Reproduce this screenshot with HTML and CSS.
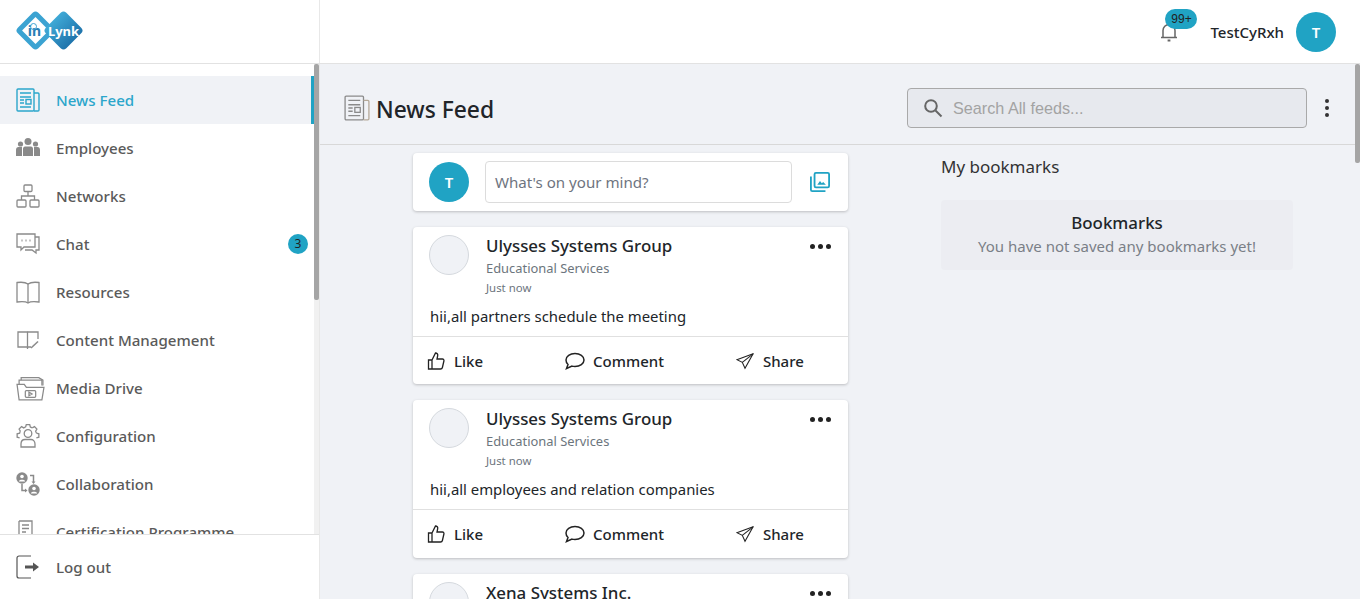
FILE: index.html
```html
<!DOCTYPE html>
<html lang="en">
<head>
  <meta charset="UTF-8">
  <title>inLynk News Feed</title>
  <link rel="stylesheet" href="styles.css">
</head>
<body>

  <header class="topbar">
    <div class="brand">
      <div class="logo">
        <span class="logo-in"><span class="logo-word">in</span></span>
        <span class="logo-lynk"><span class="logo-word">Lynk</span></span>
      </div>
    </div>
    <div class="topbar-right">
      <div class="bell">
        <svg width="20" height="22" viewBox="0 0 20 22" fill="none" stroke="#666" stroke-width="1.5"><path d="M4 16V9.5a6 6 0 0 1 12 0V16"/><path d="M2 16.5h16"/><path d="M8.6 19.5h2.8" stroke-width="2"/></svg>
        <span class="bell-count">99+</span>
      </div>
      <span class="user-name">TestCyRxh</span>
      <div class="avatar">T</div>
    </div>
  </header>

  <div class="app">
    <aside class="sidebar">
      <nav class="nav">
        <a class="nav-item active">
          <svg class="nav-icon" viewBox="0 0 24 24" fill="none" stroke="#2ba6cb" stroke-width="1.4"><rect x="1" y="1" width="17" height="22" rx="1"/><path d="M18 5h4a1 1 0 0 1 1 1v16a1 1 0 0 1-1 1h-4"/><path d="M4 5h11M4 9h11M4 12h4M4 15h4M4 19h11"/><rect x="10" y="11.5" width="5" height="4.5"/></svg>
          <span>News Feed</span>
        </a>
        <a class="nav-item">
          <svg class="nav-icon" viewBox="0 0 24 24" fill="#8a8a8a"><circle cx="12" cy="5.5" r="3.5"/><circle cx="4.5" cy="8" r="2.6"/><circle cx="19.5" cy="8" r="2.6"/><path d="M7 12.5c0-1 1-2 2-2h6c1 0 2 1 2 2V20H7z"/><path d="M0 14c0-2 1-3 2.5-3H6v9H0zM24 14c0-2-1-3-2.5-3H18v9h6z"/></svg>
          <span>Employees</span>
        </a>
        <a class="nav-item">
          <svg class="nav-icon" viewBox="0 0 24 24" fill="none" stroke="#8a8a8a" stroke-width="1.3"><rect x="8" y="1" width="8" height="6.5" rx="1"/><rect x="1" y="16" width="9" height="7" rx="1"/><rect x="14" y="16" width="9" height="7" rx="1"/><path d="M12 7.5V12M5.5 16v-4h13v4"/></svg>
          <span>Networks</span>
        </a>
        <a class="nav-item">
          <svg class="nav-icon" viewBox="0 0 24 24" fill="none" stroke="#8a8a8a" stroke-width="1.3"><path d="M1 2h18v13H8l-3 3v-3H1z"/><path d="M19 5h4v13h-3v3l-4-3H9"/><path d="M5.5 8.5h1M9.5 8.5h1M13.5 8.5h1" stroke-width="1.8"/></svg>
          <span>Chat</span>
          <span class="nav-badge">3</span>
        </a>
        <a class="nav-item">
          <svg class="nav-icon" viewBox="0 0 24 24" fill="none" stroke="#8a8a8a" stroke-width="1.3"><path d="M12 4c-2-1.5-7-2-11-1.5V22c4-.5 9-.5 11 1 2-1.5 7-1.5 11-1V2.500C19 2 14 2.500 12 4z"/><path d="M12 4v19"/></svg>
          <span>Resources</span>
        </a>
        <a class="nav-item">
          <svg class="nav-icon" viewBox="0 0 24 24" fill="none" stroke="#8a8a8a" stroke-width="1.3"><path d="M2 4h9.5v15H2z"/><path d="M11.5 4H22v7M11.5 19v2M11.5 19H15"/><path d="M15 20l7-6.5" stroke-width="1.6"/></svg>
          <span>Content Management</span>
        </a>
        <a class="nav-item">
          <svg class="nav-icon wide" viewBox="0 0 28 26" fill="none" stroke="#8a8a8a" stroke-width="1.2"><path d="M5 5V2.5h17L26 5v5"/><path d="M3 9V5h22v5"/><path d="M1 9h7l2 3h17l-2 12H3z"/><rect x="9" y="15" width="10" height="6.5" rx="1"/><path d="M12.5 16.5V20l3-1.700z"/></svg>
          <span>Media Drive</span>
        </a>
        <a class="nav-item">
          <svg class="nav-icon" viewBox="-12 -11.5 24 24" fill="none" stroke="#8a8a8a" stroke-width="1.3">
            <path d="M-2.4-8.36L-1.72-10.86H1.72L2.4-8.36A8.7 8.7 0 0 1 4.214-7.608"/>
            <path transform="rotate(45)" d="M-2.4-8.36L-1.72-10.86H1.72L2.4-8.36A8.7 8.7 0 0 1 4.214-7.608"/>
            <path transform="rotate(90)" d="M-2.4-8.36L-1.72-10.86H1.72L2.4-8.36"/>
            <path transform="rotate(-45)" d="M-2.4-8.36L-1.72-10.86H1.72L2.4-8.36A8.7 8.7 0 0 1 4.214-7.608"/>
            <path transform="rotate(-90)" d="M-2.4-8.36L-1.72-10.86H1.72L2.4-8.36A8.7 8.7 0 0 1 4.214-7.608"/>
            <circle cx="0" cy="-2" r="3.8"/>
            <path d="M-7 11.500V8.500c0-3 2-4.500 4-4.500h6c2 0 4 1.500 4 4.500v3z"/>
          </svg>
          <span>Configuration</span>
        </a>
        <a class="nav-item">
          <svg class="nav-icon" viewBox="0 0 24 24" fill="none" stroke="#8a8a8a" stroke-width="1.5"><circle cx="6" cy="6" r="5.7" fill="#8a8a8a" stroke="none"/><circle cx="18" cy="18" r="5.7" fill="#8a8a8a" stroke="none"/><circle cx="6" cy="4.5" r="1.8" fill="#fff" stroke="none"/><path d="M2.800 9.500c0-2.500 6.400-2.500 6.400 0z" fill="#fff" stroke="none"/><circle cx="18" cy="16.5" r="1.8" fill="#fff" stroke="none"/><path d="M14.800 21.500c0-2.500 6.400-2.500 6.400 0z" fill="#fff" stroke="none"/><path d="M6 12v6.500h3.500M14 3.500h3.500V10"/><path d="M9 16.500l2.500 2-2.500 2zM15.500 9.500l2 2.500 2-2.500z" fill="#8a8a8a" stroke="none"/></svg>
          <span>Collaboration</span>
        </a>
        <a class="nav-item">
          <svg class="nav-icon" viewBox="0 0 24 24" fill="none" stroke="#8a8a8a" stroke-width="1.3"><path d="M3 1h13v14M3 1v18h9"/><path d="M6 5h7M6 8.500h7M6 12h4"/><circle cx="17" cy="19" r="4"/></svg>
          <span>Certification Programme</span>
        </a>
      </nav>
      <a class="nav-item logout">
        <svg class="nav-icon" viewBox="0 0 24 24" fill="none" stroke="#555" stroke-width="1.2"><path d="M15 1H3a2 2 0 0 0-2 2v18a2 2 0 0 0 2 2h12"/><path d="M9 12h10" stroke-width="3"/><path d="M17 7.500l6 4.500-6 4.500z" fill="#555" stroke="none"/></svg>
        <span>Log out</span>
      </a>
      <div class="scroll-thumb side-thumb"></div>
    </aside>

    <main class="main">
      <div class="page-head">
        <div class="page-title">
          <svg width="26" height="26" viewBox="0 0 24 24" fill="none" stroke="#8a8a8a" stroke-width="1.2"><rect x="1" y="1" width="17" height="22" rx="1"/><path d="M18 5h4a1 1 0 0 1 1 1v16a1 1 0 0 1-1 1h-4" stroke="#b5a999"/><path d="M4 5h11M4 9h11M4 12h4M4 15h4M4 19h11"/><rect x="10" y="11.5" width="5" height="4.5"/></svg>
          <h1>News Feed</h1>
        </div>
        <div class="page-tools">
          <div class="search">
            <svg width="20" height="20" viewBox="0 0 20 20" fill="none" stroke="#666" stroke-width="2"><circle cx="8" cy="8" r="5.8"/><path d="M12.5 12.5l6 6"/></svg>
            <span>Search All feeds...</span>
          </div>
          <div class="kebab"><i></i><i></i><i></i></div>
        </div>
      </div>

      <div class="content">
        <section class="feed">
          <div class="card composer">
            <div class="avatar">T</div>
            <div class="composer-input">What's on your mind?</div>
            <svg width="20" height="20" viewBox="0 0 22 22" fill="none" stroke="#20a3c4" stroke-width="2"><rect x="5" y="1" width="16" height="16" rx="1.5"/><path d="M1 5v14.5a1.5 1.5 0 0 0 1.5 1.5H17"/><path d="M8 14l3-4 2 2.5 1.5-1.5 3 3z" fill="#20a3c4" stroke="none"/></svg>
          </div>

          <article class="card post">
            <div class="post-head">
              <div class="post-logo"></div>
              <div class="post-meta">
                <h3>Ulysses Systems Group</h3>
                <p class="post-sector">Educational Services</p>
                <p class="post-time">Just now</p>
              </div>
              <div class="dots"><i></i><i></i><i></i></div>
            </div>
            <p class="post-text">hii,all partners schedule the meeting</p>
            <div class="post-actions">
              <a class="action like">
                <svg width="18" height="18" viewBox="0 0 18 18" fill="none" stroke="#222" stroke-width="1.3"><path d="M5 8H1.500v9H5zM5 8l3.500-7c1.500 0 2.500 1 2.200 2.500L10 7h5.500c1 0 1.700.9 1.400 2l-1.500 6.500c-.2.9-1 1.500-1.900 1.500H5"/></svg>
                Like
              </a>
              <a class="action comment">
                <svg width="20" height="18" viewBox="0 0 20 18" fill="none" stroke="#222" stroke-width="1.5"><path d="M10 1.500c5 0 9 2.700 9 6.500s-4 6.500-9 6.500c-1 0-2-.1-3-.4L1.500 16.500l1.500-4C1.700 11.300 1 9.700 1 8c0-3.800 4-6.500 9-6.500z"/></svg>
                Comment
              </a>
              <a class="action share">
                <svg width="18" height="18" viewBox="0 0 20 18" fill="none" stroke="#222" stroke-width="1.2"><path d="M19 1L1 7.500l6 3 3 6.500z"/><path d="M19 1L7 10.500"/></svg>
                Share
              </a>
            </div>
          </article>

          <article class="card post">
            <div class="post-head">
              <div class="post-logo"></div>
              <div class="post-meta">
                <h3>Ulysses Systems Group</h3>
                <p class="post-sector">Educational Services</p>
                <p class="post-time">Just now</p>
              </div>
              <div class="dots"><i></i><i></i><i></i></div>
            </div>
            <p class="post-text">hii,all employees and relation companies</p>
            <div class="post-actions">
              <a class="action like">
                <svg width="18" height="18" viewBox="0 0 18 18" fill="none" stroke="#222" stroke-width="1.3"><path d="M5 8H1.500v9H5zM5 8l3.500-7c1.500 0 2.500 1 2.200 2.500L10 7h5.500c1 0 1.700.9 1.400 2l-1.500 6.500c-.2.9-1 1.500-1.900 1.500H5"/></svg>
                Like
              </a>
              <a class="action comment">
                <svg width="20" height="18" viewBox="0 0 20 18" fill="none" stroke="#222" stroke-width="1.5"><path d="M10 1.500c5 0 9 2.700 9 6.500s-4 6.500-9 6.500c-1 0-2-.1-3-.4L1.500 16.500l1.500-4C1.700 11.300 1 9.700 1 8c0-3.800 4-6.500 9-6.500z"/></svg>
                Comment
              </a>
              <a class="action share">
                <svg width="18" height="18" viewBox="0 0 20 18" fill="none" stroke="#222" stroke-width="1.2"><path d="M19 1L1 7.500l6 3 3 6.500z"/><path d="M19 1L7 10.500"/></svg>
                Share
              </a>
            </div>
          </article>

          <article class="card post">
            <div class="post-head">
              <div class="post-logo"></div>
              <div class="post-meta">
                <h3>Xena Systems Inc.</h3>
              </div>
              <div class="dots"><i></i><i></i><i></i></div>
            </div>
          </article>
        </section>

        <section class="side">
          <h2>My bookmarks</h2>
          <div class="bookmarks">
            <h4>Bookmarks</h4>
            <p>You have not saved any bookmarks yet!</p>
          </div>
        </section>
      </div>
      <div class="scroll-thumb main-thumb"></div>
    </main>
  </div>

</body>
</html>
```

FILE: styles.css
```css
* {
  box-sizing: border-box;
}

body {
  margin: 0;
  height: 599px;
  overflow: hidden;
  font-family: "Noto Sans", sans-serif;
  color: #212529;
  background: #fff;
}

h1, h2, h3, h4, p {
  margin: 0;
}

/* top bar */
.topbar {
  height: 64px;
  display: flex;
  justify-content: space-between;
  border-bottom: 1px solid #e2e2e2;
  background: #fff;
}

.brand {
  width: 320px;
  border-right: 1px solid #e8e8e8;
  padding: 12px 0 0 16px;
}

.logo {
  display: flex;
  width: 68px;
  height: 40px;
  position: relative;
}

/* little figure over the i */
.logo::before {
  content: "";
  position: absolute;
  left: 14px;
  top: 11px;
  width: 5px;
  height: 5px;
  border: 1px solid #3ba3d2;
  border-radius: 50%;
  z-index: 2;
}

.logo-in,
.logo-lynk {
  position: absolute;
  top: 4px;
  width: 29px;
  height: 29px;
  transform: rotate(45deg);
  border-radius: 4px;
}

.logo-in {
  left: 5px;
  border: 5px solid #3ba3d2;
  background: #fff;
}

.logo-lynk {
  left: 33px;
  background: linear-gradient(90deg, #3fa9d6, #1f74ac);
}

.logo-word {
  position: absolute;
  left: 50%;
  top: 50%;
  transform-origin: 0 0;
  transform: rotate(-45deg) translate(-50%, -50%);
  font-size: 13px;
  font-weight: 700;
  line-height: 1;
}

.logo-in .logo-word {
  color: #2a7fb5;
  font-size: 14px;
  transform: rotate(-45deg) translate(calc(-50% - 1px), -50%);
}

.logo-lynk .logo-word {
  color: #fff;
}

.topbar-right {
  display: flex;
  align-items: center;
  padding-right: 24px;
}

.bell {
  position: relative;
  width: 20px;
  height: 22px;
  margin-top: 1px;
  margin-right: 31px;
}

.bell-count {
  position: absolute;
  left: 6px;
  top: -12px;
  width: 32px;
  height: 20px;
  border-radius: 10px;
  background: #20a3c4;
  color: #222;
  font-family: "Liberation Sans", sans-serif;
  font-size: 12px;
  line-height: 20px;
  text-align: center;
}

.user-name {
  font-size: 15px;
  font-weight: 500;
  margin-right: 12px;
}

.avatar {
  width: 40px;
  height: 40px;
  flex-shrink: 0;
  border-radius: 50%;
  background: #20a3c4;
  color: #fff;
  font-size: 15px;
  font-weight: 600;
  line-height: 40px;
  text-align: center;
}

/* app shell */
.app {
  display: flex;
  height: 535px;
}

.sidebar {
  position: relative;
  width: 320px;
  flex-shrink: 0;
  border-right: 1px solid #e8e8e8;
  display: flex;
  flex-direction: column;
  background: #fff;
}

.nav {
  height: 470px;
  overflow: hidden;
  padding-top: 12px;
  margin-right: 5px;
}

.nav-item {
  display: flex;
  align-items: center;
  height: 48px;
  padding: 0 6px 0 16px;
  font-size: 15.1px;
  font-weight: 500;
  color: #5a5a5a;
}

.nav-item span:first-of-type {
  margin-left: 16px;
}

.nav-item.active {
  background: #f0f2f6;
  border-right: 3px solid #20a3c4;
  color: #2ba6cb;
}

.nav-icon {
  width: 24px;
  height: 24px;
  flex-shrink: 0;
}

.nav-icon.wide {
  width: 29px;
  height: 27px;
  margin-right: -5px;
}

.nav-item .nav-badge {
  width: 20px;
  height: 20px;
  margin-left: auto;
  border-radius: 50%;
  background: #20a3c4;
  color: #222;
  font-size: 12px;
  font-weight: 400;
  line-height: 20px;
  text-align: center;
}

.logout {
  height: 65px;
  border-top: 1px solid #e2e2e2;
}

.sidebar::after {
  content: "";
  position: absolute;
  top: 0;
  right: 0;
  width: 5px;
  height: 470px;
  background: #f1f1f1;
}

.scroll-thumb {
  position: absolute;
  top: 0;
  right: 0;
  width: 5px;
  border-radius: 2px;
  background: #a5a5a5;
  z-index: 1;
}

.side-thumb {
  height: 236px;
}

/* main column */
.main {
  position: relative;
  flex: 1;
  background: #f0f2f6;
  overflow: hidden;
}

.main-thumb {
  height: 99px;
}

.page-head {
  height: 81px;
  display: flex;
  align-items: center;
  justify-content: space-between;
  padding: 8px 31px 0 24px;
  border-bottom: 1px solid #d8d8d8;
}

.page-title {
  display: flex;
  align-items: center;
  gap: 7px;
}

.page-title h1 {
  margin-top: 2px;
  margin-left: -1px;
  font-size: 22.8px;
  font-weight: 500;
  color: #212529;
}

.page-tools {
  display: flex;
  align-items: center;
  gap: 18px;
}

.search {
  display: flex;
  align-items: center;
  gap: 10px;
  width: 400px;
  height: 40px;
  padding-left: 15px;
  border: 1px solid #a9a9a9;
  border-radius: 4px;
  background: #e7e9ee;
  font-family: "Liberation Sans", sans-serif;
  font-size: 16.2px;
  color: #a3a3a3;
}

.kebab {
  display: flex;
  flex-direction: column;
  gap: 3px;
  width: 4px;
}

.kebab i {
  width: 4px;
  height: 4px;
  border-radius: 50%;
  background: #333;
}

.content {
  display: flex;
  padding: 8px 0 0 93px;
}

.feed {
  width: 435px;
  flex-shrink: 0;
  display: flex;
  flex-direction: column;
  gap: 16px;
}

.card {
  background: #fff;
  border-radius: 4px;
  box-shadow: 0 1px 3px rgba(0, 0, 0, 0.22);
}

.composer {
  height: 58px;
  display: flex;
  align-items: center;
  padding: 0 18px 0 16px;
}

.composer-input {
  flex: 1;
  height: 42px;
  margin: 0 18px 0 16px;
  padding-left: 9px;
  border: 1px solid #dcdcdc;
  border-radius: 4px;
  font-size: 15.1px;
  line-height: 40px;
  color: #6e7480;
}

.post {
  flex-shrink: 0;
}

.post-head {
  display: flex;
  padding: 8px 17px 0 16px;
}

.post-logo {
  width: 40px;
  height: 40px;
  flex-shrink: 0;
  border: 1px solid #d5d9de;
  border-radius: 50%;
  background: #f0f2f6;
}

.post-meta {
  flex: 1;
  margin-left: 17px;
}

.post-meta h3 {
  font-size: 16.9px;
  font-weight: 500;
  line-height: 22px;
}

.post-sector {
  margin-top: 1px;
  font-size: 12.9px;
  line-height: 20px;
  color: #6c757d;
}

.post-time {
  padding-top: 1px;
  font-size: 11.4px;
  line-height: 18px;
  color: #6c757d;
}

.dots {
  display: flex;
  gap: 3px;
  margin-top: 9px;
  height: 5px;
}

.dots i {
  width: 5px;
  height: 5px;
  border-radius: 50%;
  background: #222;
}

.post-text {
  padding: 8.7px 17px 0;
  font-size: 14.9px;
  line-height: 20px;
  height: 39px;
  color: #212529;
}

.post-actions {
  display: flex;
  height: 48.4px;
  border-top: 1px solid #e0e0e0;
  align-items: center;
  font-size: 15px;
  font-weight: 500;
  color: #212529;
}

.action {
  display: flex;
  align-items: center;
  gap: 9px;
}

.action.like {
  margin-left: 14px;
}

.action.comment {
  margin-left: 82px;
  gap: 8px;
}

.action.share {
  margin-left: 72px;
}

.side {
  width: 352px;
  margin-left: 93px;
}

.side h2 {
  font-size: 17px;
  font-weight: 400;
  line-height: 28px;
  color: #333;
}

.bookmarks {
  height: 70px;
  margin-top: 19px;
  padding-top: 12px;
  border-radius: 4px;
  background: #ecedf2;
  text-align: center;
}

.bookmarks h4 {
  font-size: 16.9px;
  font-weight: 500;
  line-height: 22px;
}

.bookmarks p {
  font-size: 15px;
  line-height: 25px;
  color: #7a7f87;
}
```
